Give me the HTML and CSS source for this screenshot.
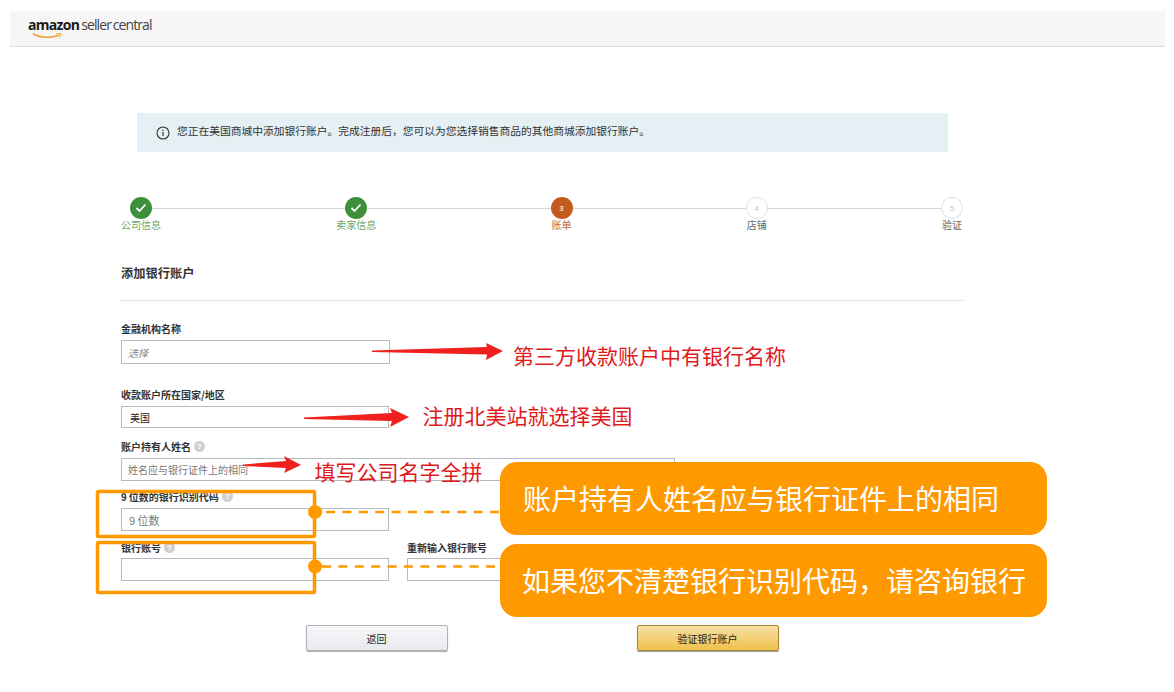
FILE: index.html
```html
<!DOCTYPE html>
<html lang="zh-CN">
<head>
<meta charset="utf-8">
<title>添加银行账户</title>
<link rel="stylesheet" href="styles.css">
</head>
<body>
<header class="topbar">
  <div class="logo">
    <span class="logo-amazon">amazon</span><span class="logo-rest">seller central</span>
    <svg class="logo-smile" width="32" height="8" viewBox="0 0 32 8"><path d="M1 1.5C8 6 19 6.5 27 3" fill="none" stroke="#f0a030" stroke-width="1.5"/><path d="M24.5 1.5L29 1.8 27.5 5.5" fill="none" stroke="#f0a030" stroke-width="1"/></svg>
  </div>
</header>
<main class="page">
  <div class="notice">
    <svg class="notice-icon" width="14" height="14" viewBox="0 0 14 14"><circle cx="7" cy="7" r="6" fill="none" stroke="#333" stroke-width="1.1"/><rect x="6.4" y="6" width="1.2" height="4.2" fill="#333"/><rect x="6.4" y="3.7" width="1.2" height="1.3" fill="#333"/></svg>
    <span class="notice-text">您正在美国商城中添加银行账户。完成注册后，您可以为您选择销售商品的其他商城添加银行账户。</span>
  </div>
  <div class="form-col">
    <ol class="steps">
      <li class="step done"><span class="dot"><svg width="12" height="10" viewBox="0 0 12 10"><path d="M1.5 5l3 3 6-6.5" fill="none" stroke="#fff" stroke-width="1.8"/></svg></span><span class="step-label">公司信息</span></li>
      <li class="step done"><span class="dot"><svg width="12" height="10" viewBox="0 0 12 10"><path d="M1.5 5l3 3 6-6.5" fill="none" stroke="#fff" stroke-width="1.8"/></svg></span><span class="step-label">卖家信息</span></li>
      <li class="step current"><span class="dot">3</span><span class="step-label">账单</span></li>
      <li class="step todo"><span class="dot">4</span><span class="step-label">店铺</span></li>
      <li class="step todo"><span class="dot">5</span><span class="step-label">验证</span></li>
    </ol>
    <h1 class="title">添加银行账户</h1>
    <div class="field f-bank">
      <label><span>金融机构名称</span></label>
      <div class="input input-bank placeholder-i">选择</div>
    </div>
    <div class="field f-country">
      <label><span>收款账户所在国家/地区</span></label>
      <div class="input input-mid input-short value">美国</div>
    </div>
    <div class="field f-holder">
      <label><span>账户持有人姓名</span><span class="help">?</span></label>
      <div class="input input-wide placeholder">姓名应与银行证件上的相同</div>
    </div>
    <div class="field f-routing">
      <label><span><b class="num">9</b> 位数的银行识别代码</span><span class="help">?</span></label>
      <div class="input input-mid placeholder"><span><span class="num-ph">9</span> 位数</span></div>
    </div>
    <div class="row f-account">
      <div class="field">
        <label><span>银行账号</span><span class="help">?</span></label>
        <div class="input input-mid"></div>
      </div>
      <div class="field">
        <label><span>重新输入银行账号</span></label>
        <div class="input input-mid"></div>
      </div>
    </div>
    <div class="actions">
      <button class="btn btn-back" type="button">返回</button>
      <button class="btn btn-primary" type="button">验证银行账户</button>
    </div>
  </div>
</main>
<div class="overlay">
  <svg class="arrows" width="1174" height="692" viewBox="0 0 1174 692">
    <g fill="#f0201e">
      <polygon points="372,350.5 487,347 486,343 503,351 486,360 487,354.5 372,352"/>
      <polygon points="304,417.5 392,413 390,408 409,417 390,427 392,421 304,419"/>
      <polygon points="243,464.5 286,461 284,456 301,465 284,473 286,468 243,466"/>
    </g>
    <g fill="none" stroke="#ff9900">
      <rect x="97.5" y="491.500" width="217" height="45" rx="1" stroke-width="3.500"/>
      <rect x="97.5" y="542.500" width="217" height="50" rx="1" stroke-width="3.500"/>
      <path d="M326 512H500" stroke-width="2.600" stroke-dasharray="9 7.400"/>
      <path d="M322 566.500H500" stroke-width="2.600" stroke-dasharray="9 7.400"/>
    </g>
    <circle cx="315" cy="512" r="7" fill="#ff9900"/>
    <circle cx="315" cy="566.500" r="7" fill="#ff9900"/>
  </svg>
  <p class="note note-1">第三方收款账户中有银行名称</p>
  <p class="note note-2">注册北美站就选择美国</p>
  <p class="note note-3">填写公司名字全拼</p>
  <div class="callout callout-1">账户持有人姓名应与银行证件上的相同</div>
  <div class="callout callout-2">如果您不清楚银行识别代码，请咨询银行</div>
</div>
</body>
</html>
```
FILE: styles.css
```css
* { box-sizing: border-box; }
html, body { margin: 0; padding: 0; height: 692px; overflow: hidden; background: #fff; }
body {
  position: relative;
  font-family: "Noto Sans CJK SC", "Liberation Sans", sans-serif;
  font-size: 10px;
  color: #333;
}
.topbar {
  margin: 11px 9px 0 10px;
  height: 36px;
  background: #f6f6f6;
  border-bottom: 1px solid #dcdcdc;
  padding: 5px 0 0 18px;
}
.logo { position: relative; display: flex; align-items: baseline; height: 18px; line-height: 17px; }
.logo-amazon { font-family: "Open Sans", sans-serif; font-weight: 700; font-size: 14px; color: #1a1a1a; letter-spacing: -0.7px; margin-right: 2px; }
.logo-rest { font-family: "Open Sans", sans-serif; font-size: 14px; color: #444; letter-spacing: -0.9px; word-spacing: -1px; }
.logo-smile { position: absolute; left: 4px; top: 16px; }
.page { padding: 66px 0 0 121px; }
.notice {
  margin-left: 16px;
  width: 811px;
  height: 39px;
  background: #e4f0f3;
  display: flex;
  align-items: center;
  gap: 7px;
  padding: 0 0 0 19px;
  color: #333;
}
.notice-text { font-size: 10.75px; margin-top: -5px; white-space: nowrap; }
.form-col { width: 842px; }
.steps {
  position: relative;
  list-style: none;
  width: 841px;
  margin: 45px 0 0;
  padding: 0;
  display: flex;
  justify-content: space-between;
}
.steps::before {
  content: "";
  position: absolute;
  left: 20px;
  right: 10px;
  top: 11px;
  height: 1px;
  background: #d5d9d9;
}
.step { position: relative; display: flex; flex-direction: column; align-items: center; width: 20px; font-size: 10px; line-height: 13px; }
.step.done { width: 40px; }
.dot {
  width: 22px;
  height: 22px;
  border-radius: 50%;
  display: flex;
  align-items: center;
  justify-content: center;
  font-family: "Liberation Sans", sans-serif;
  font-size: 8px;
  font-weight: 700;
}
.step-label { white-space: nowrap; margin-top: -1px; }
.done .dot { background: #3d8f3a; }
.done .step-label { color: #6aa866; }
.current .dot { background: #c35a1e; color: #f6d9c6; }
.current .step-label { color: #c0693a; }
.todo .dot { background: #fff; border: 1px solid #dfe3e3; color: #c8c8c8; font-weight: 400; }
.todo .step-label { color: #666; }
.title {
  box-sizing: content-box;
  margin: 35px 0 0;
  padding-bottom: 19px;
  height: 15px;
  border-bottom: 1px solid #e0e0e0;
  font-size: 12.25px;
  line-height: 15px;
  font-weight: 700;
  color: #333;
}
.field label {
  display: flex;
  align-items: center;
  gap: 3px;
  height: 14px;
  margin-bottom: 5px;
  font-size: 10px;
  font-weight: 700;
  color: #333;
  white-space: pre;
}
.num { font-family: "Liberation Sans", sans-serif; }
.help {
  display: inline-flex;
  align-items: center;
  justify-content: center;
  width: 11px;
  height: 11px;
  border-radius: 50%;
  background: #d0d0d0;
  color: #fff;
  font-family: "Liberation Sans", sans-serif;
  font-size: 8px;
  font-weight: 700;
}
.input {
  border: 1px solid #b5bbbe;
  background: #fff;
  display: flex;
  align-items: center;
  padding-left: 6px;
  font-size: 10px;
  height: 23px;
  white-space: pre;
}
.input-mid { width: 268px; }
.input-bank { width: 269px; }
.input-wide { width: 554px; }
.input-short { height: 22px; }
.placeholder-i { color: #888; font-style: italic; height: 24px; }
.placeholder { color: #777; }
.num-ph { font-family: "Liberation Sans", sans-serif; }
.value { color: #222; padding-left: 8px; }
.f-bank { margin-top: 20px; }
.f-country { margin-top: 23px; }
.f-holder { margin-top: 11px; }
.f-routing { margin-top: 8px; }
.f-routing .input { padding-left: 7px; font-size: 11px; }
.row { display: flex; gap: 18px; margin-top: 9px; }
.f-account label { margin-bottom: 4px; }
.actions { display: flex; gap: 189px; margin: 44px 0 0 184.500px; }
.btn {
  width: 142px;
  height: 26px;
  border-radius: 2px;
  font-family: inherit;
  font-size: 10px;
  color: #222;
  padding: 0;
}
.btn-back { background: linear-gradient(#f7f8fa, #e7e9ec); border: 1px solid #adb1b8; box-shadow: 0 1px 1px #aaa; }
.btn-primary { background: linear-gradient(#f7dfa5, #f0c14b); border: 1px solid #a88734; box-shadow: 0 1px 1px #999; }
.overlay { position: absolute; left: 0; top: 0; width: 1174px; height: 692px; }
.arrows { position: absolute; left: 0; top: 0; }
.note {
  position: absolute;
  margin: 0;
  font-size: 21px;
  line-height: 30px;
  color: #e01a1c;
  white-space: nowrap;
}
.note-1 { left: 513px; top: 340px; }
.note-2 { left: 422.500px; top: 400px; }
.note-3 { left: 314.500px; top: 456px; }
.callout {
  position: absolute;
  left: 500px;
  width: 547px;
  height: 73px;
  border-radius: 17px;
  background: #ff9900;
  color: #fff;
  font-size: 28px;
  line-height: 73px;
  padding-left: 22px;
  white-space: nowrap;
}
.callout-1 { top: 462px; padding-left: 23px; }
.callout-2 { top: 544px; }
```
